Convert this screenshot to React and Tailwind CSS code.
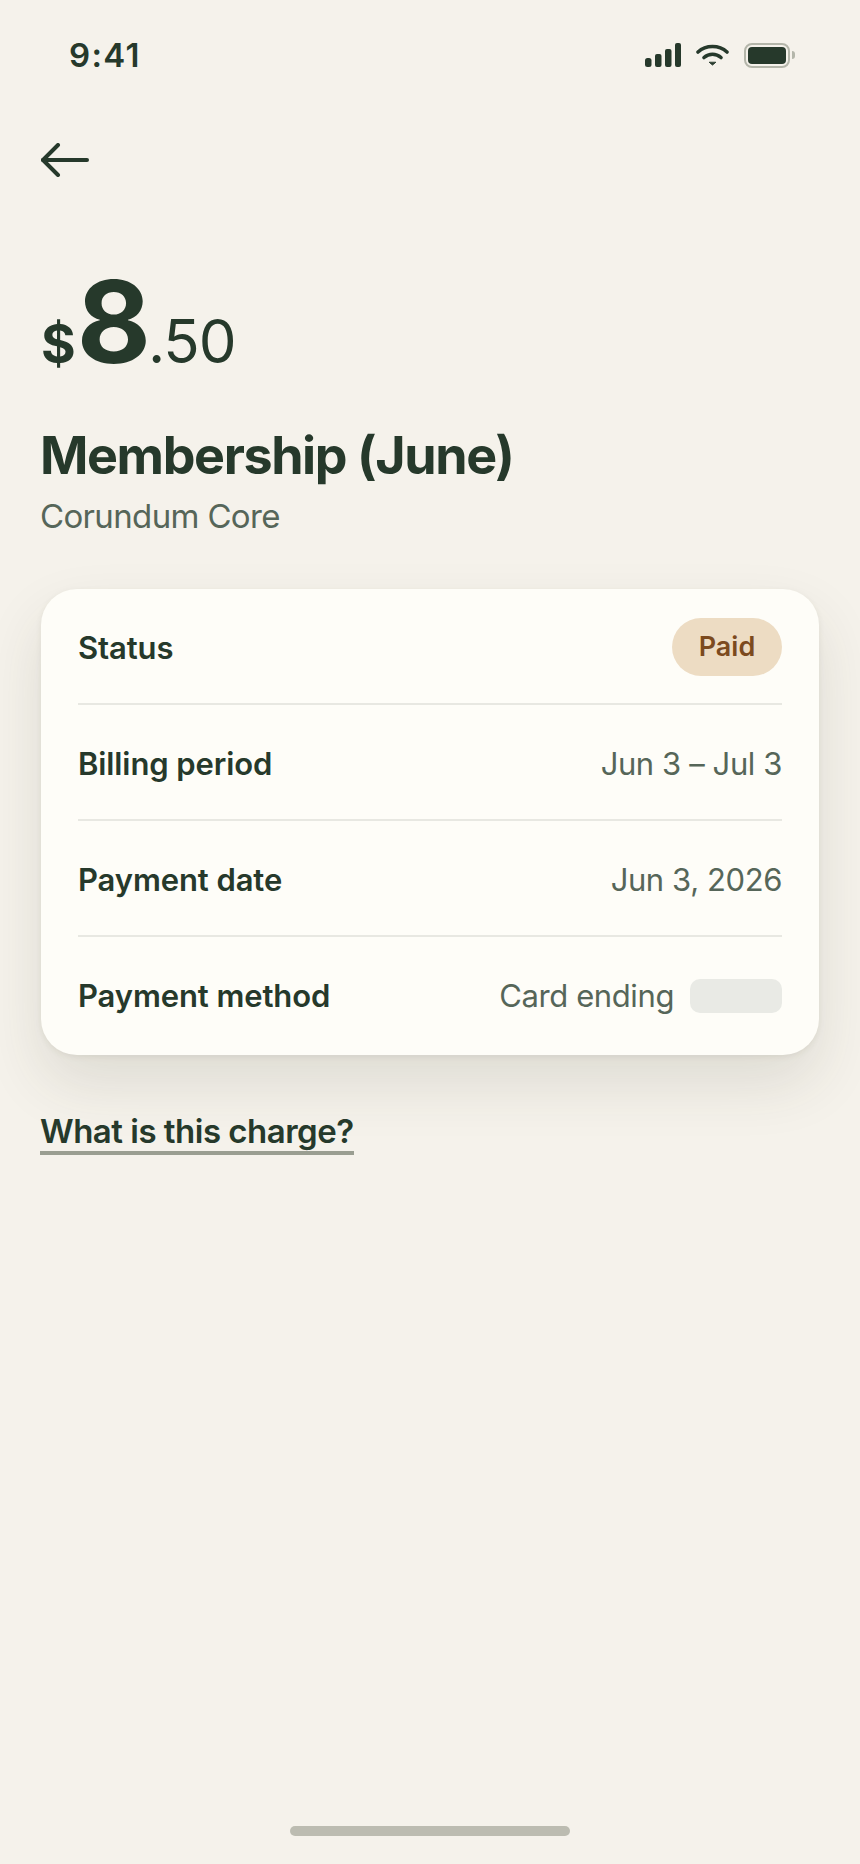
import React from "react";

const rows = [
  { label: "Status" },
  { label: "Billing period", value: "Jun 3 – Jul 3" },
  { label: "Payment date", value: "Jun 3, 2026" },
  { label: "Payment method", value: "Card ending", masked: true },
];

const StatusIcons = () => (
  <div className="flex items-center gap-[15px]">
    <svg width="36" height="24" viewBox="0 0 36 24" fill="#26392b">
      <rect x="0" y="15" width="6.5" height="9" rx="2.5" />
      <rect x="10" y="11" width="6.5" height="13" rx="2" />
      <rect x="20" y="6" width="6.5" height="18" rx="2" />
      <rect x="30" y="0" width="6" height="24" rx="2" />
    </svg>
    <svg width="33" height="22" viewBox="0 0 33 22" fill="none" stroke="#26392b" strokeWidth="3.6" strokeLinecap="round">
      <path d="M2 8C10 0.7 23 0.7 31 8" />
      <path d="M8 13.5C13 9.2 20 9.2 25 13.5" />
      <path d="M13.5 18.5L16.5 21L19.5 18.5Z" fill="#26392b" strokeWidth="1" strokeLinejoin="round" />
    </svg>
    <div className="flex items-center">
      <div className="flex h-[25px] w-[46px] items-center justify-center rounded-[8px] border-[2px] border-[#b4b6aa]">
        <div className="h-[17px] w-[38px] rounded-[4px] bg-[#26392b]" />
      </div>
      <div className="ml-[2px] h-[8px] w-[3px] rounded-r-full bg-[#b4b6aa]" />
    </div>
  </div>
);

const BackArrow = () => (
  <svg width="48" height="34" viewBox="0 0 48 34" fill="none" stroke="#26392b" strokeWidth="4" strokeLinecap="round" strokeLinejoin="round">
    <path d="M2 17H46" />
    <path d="M17 2L2 17L17 32" />
  </svg>
);

const App = () => {
  return (
    <div className="flex h-[1864px] w-[860px] flex-col overflow-hidden bg-[#f5f2eb] font-['Inter',sans-serif] text-[#26392b]">
      <div className="mt-[42px] flex h-[26px] items-center justify-between pl-[69px] pr-[65px]">
        <span className="text-[33px] font-semibold leading-[26px] tracking-[1.3px]">9:41</span>
        <StatusIcons />
      </div>

      <div className="mt-[75px] pl-[41px]">
        <BackArrow />
      </div>

      <div className="mt-[88px] flex items-baseline pl-[41px] leading-none">
        <span className="text-[53px] font-bold">$</span>
        <span className="ml-[1px] text-[114px] font-bold tracking-[-3px]">8</span>
        <span className="text-[60px] tracking-[-1px]">.50</span>
      </div>

      <h1 className="mt-[46px] pl-[40px] text-[52px] font-bold leading-[62px] tracking-[-1.4px]">Membership (June)</h1>
      <p className="mt-[7px] pl-[40px] text-[33px] leading-[44px] tracking-[-0.65px] text-[#566659]">Corundum Core</p>

      <div className="mx-[41px] mt-[51px] rounded-[36px] bg-[#fefdf8] px-[37px] shadow-[0_28px_60px_rgba(60,60,40,0.12),0_2px_6px_rgba(60,60,40,0.08)]">
        {rows.map((row, i) => (
          <div
            key={row.label}
            className={`flex items-center justify-between text-[31px] ${i < rows.length - 1 ? "h-[116px] border-b-2 border-[#e8e8e2] pt-[4px]" : "h-[118px]"}`}
          >
            <span className="font-semibold tracking-[-0.1px]">{row.label}</span>
            {i === 0 && (
              <span className="-mt-[3px] flex h-[58px] w-[110px] items-center justify-center rounded-full bg-[#eddcc3] pt-[2px] text-[27px] font-semibold text-[#7c4a1e]">
                Paid
              </span>
            )}
            {row.value && (
              <div className="flex items-center tracking-[-0.4px] text-[#566659]">
                <span>{row.value}</span>
                {row.masked && <div className="ml-[16px] h-[34px] w-[92px] rounded-[10px] bg-[#e9eae5]" />}
              </div>
            )}
          </div>
        ))}
      </div>

      <div className="mt-[56px] pl-[40px]">
        <a className="inline-block border-b-[4px] border-[#9a9e91] text-[33px] font-semibold leading-[40px] tracking-[-0.5px]">What is this charge?</a>
      </div>

      <div className="mx-auto mb-[28px] mt-auto h-[10px] w-[280px] rounded-full bg-[#bcbcb1]" />
    </div>
  );
};

export default App;
